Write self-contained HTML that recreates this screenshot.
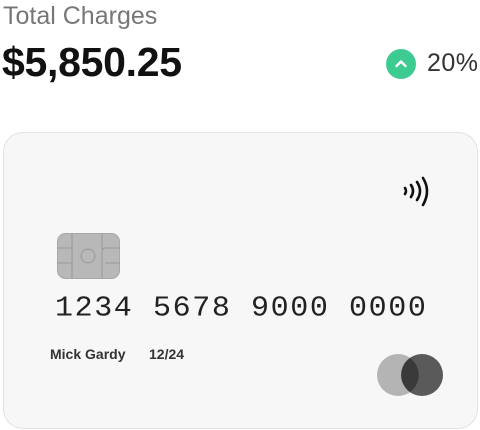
<!DOCTYPE html>
<html><head><style>
body{margin:0;width:480px;height:430px;background:#fff;position:relative;overflow:hidden;font-family:"Liberation Sans",sans-serif}
.t{position:absolute;left:3px;top:2px;font-size:25px;color:#777}
.amt{position:absolute;left:2px;top:39px;font-size:41px;font-weight:bold;color:#111;letter-spacing:-0.3px}
.badge{position:absolute;left:386px;top:49px;width:30px;height:30px;border-radius:50%;background:#3ecb92}
.pct{position:absolute;left:427px;top:49px;font-size:25px;color:#333;letter-spacing:0.5px}
.card{position:absolute;left:3px;top:132px;width:473px;height:295px;border:1px solid #e2e2e2;border-radius:20px;background:#f7f7f7}
.num{position:absolute;left:55px;top:292px;font-family:"Liberation Mono",monospace;font-size:30px;color:#222;letter-spacing:1.6px;white-space:pre;transform:scaleY(0.95)}
.nm{position:absolute;left:50px;top:346px;font-size:14px;font-weight:bold;color:#333}
.ex{position:absolute;left:149px;top:346px;font-size:14px;font-weight:bold;color:#333}
</style></head><body>
<div class="t">Total Charges</div>
<div class="amt">$5,850.25</div>
<div class="badge"><svg width="30" height="30"><path d="M10.5 17 L15 12.5 L19.5 17" stroke="#fff" stroke-width="2.4" fill="none" stroke-linecap="round" stroke-linejoin="round"/></svg></div>
<div class="pct">20%</div>
<div class="card"></div>
<svg style="position:absolute;left:400px;top:175px" width="34" height="38" fill="none" stroke="#111" stroke-width="2.6" stroke-linecap="round">
<path d="M5 13 Q7 16 5 19"/><path d="M11 10 Q15 16 11 22"/><path d="M17 7 Q23 16 17 25"/><path d="M23 3 Q31 16 23 30"/></svg>
<svg style="position:absolute;left:57px;top:233px" width="64" height="47">
<rect x="0.5" y="0.5" width="62" height="45" rx="8" fill="#b8b8b8" stroke="#a8a8a8"/>
<g stroke="#999" stroke-width="1" fill="none"><path d="M0 15H15M0 30H15M48 15H63M48 30H63M15 0V46M45 0V16M48 15Q45 15 45 20V30M45 30V46"/><circle cx="31" cy="23" r="7"/></g></svg>
<div class="num">1234 5678 9000 0000</div>
<div class="nm">Mick Gardy</div>
<div class="ex">12/24</div>
<svg style="position:absolute;left:376px;top:352px" width="70" height="46">
<circle cx="22" cy="23" r="21" fill="#b4b4b4"/>
<circle cx="46" cy="23" r="21" fill="#5a5a5a"/>
<path d="M34 6 A21 21 0 0 1 34 40 A21 21 0 0 1 34 6Z" fill="#3a3a3a"/></svg>
</body></html>
